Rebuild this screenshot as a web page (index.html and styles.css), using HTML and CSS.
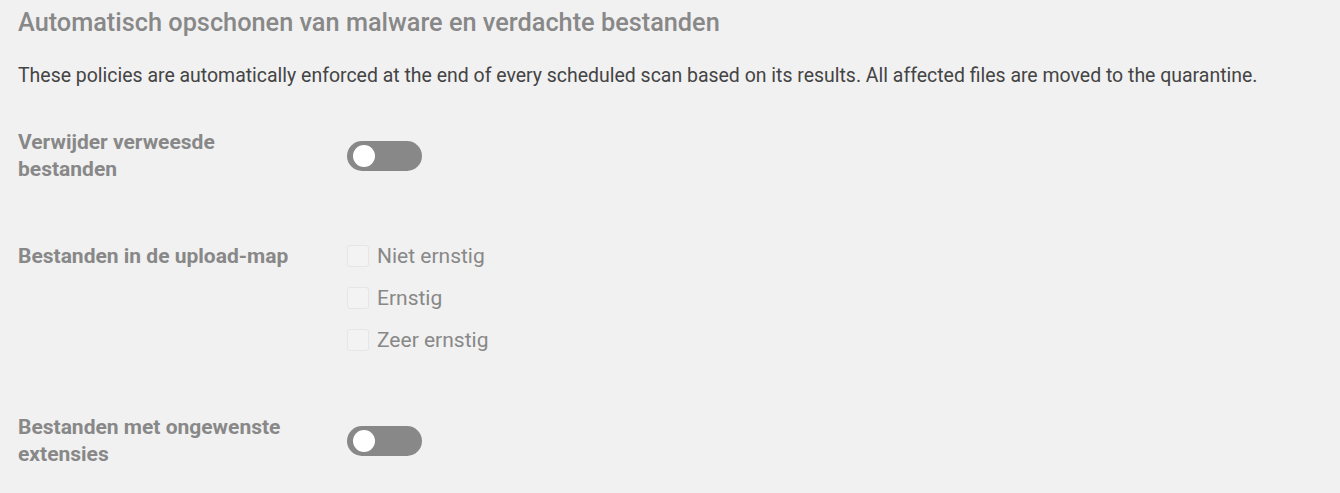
FILE: index.html
```html
<!DOCTYPE html>
<html lang="nl">
<head>
<meta charset="utf-8">
<link rel="stylesheet" href="styles.css">
</head>
<body>
<div class="page">
  <h2 class="title">Automatisch opschonen van malware en verdachte bestanden</h2>
  <p class="desc">These policies are automatically enforced at the end of every scheduled scan based on its results. All affected files are moved to the quarantine.</p>

  <div class="row row-toggle">
    <div class="label">Verwijder verweesde bestanden</div>
    <div class="control"><span class="toggle"><span class="knob"></span></span></div>
  </div>

  <div class="row row-checks">
    <div class="label">Bestanden in de upload-map</div>
    <div class="control checks">
      <label class="check"><span class="box"></span><span>Niet ernstig</span></label>
      <label class="check"><span class="box"></span><span>Ernstig</span></label>
      <label class="check"><span class="box"></span><span>Zeer ernstig</span></label>
    </div>
  </div>

  <div class="row row-toggle">
    <div class="label">Bestanden met ongewenste extensies</div>
    <div class="control"><span class="toggle"><span class="knob"></span></span></div>
  </div>
</div>
</body>
</html>
```

FILE: styles.css
```css
html, body {
  margin: 0;
  padding: 0;
  background: #f1f1f1;
}
body {
  font-family: Roboto, "Liberation Sans", sans-serif;
}
.page {
  padding: 8px 18px 0 18px;
}
.title {
  margin: 0;
  font-size: 25.3px;
  font-weight: 500;
  color: #888888;
  line-height: 30px;
}
.desc {
  margin: 23.5px 0 0 0;
  font-size: 19.47px;
  color: #444444;
  line-height: 27px;
}
.row {
  display: grid;
  grid-template-columns: 280px 1fr;
  column-gap: 49px;
  margin-top: 58.5px;
}
.desc + .row { margin-top: 40px; }
.row-toggle {
  align-items: center;
}
.label {
  font-size: 21px;
  font-weight: 700;
  color: #888888;
  line-height: 27px;
}
.row-checks .label {
  padding-top: 2px;
}
.checks {
  display: flex;
  flex-direction: column;
  gap: 12px;
}
.check {
  display: flex;
  align-items: center;
  gap: 8px;
  height: 30px;
  font-size: 21px;
  color: #888888;
}
.box {
  width: 22px;
  height: 22px;
  border: 1px solid #e6e6e6;
  border-radius: 3px;
  background: #f3f3f3;
  box-sizing: border-box;
}
.toggle {
  display: block;
  width: 75px;
  height: 30px;
  border-radius: 15px;
  background: #888888;
  position: relative;
}
.knob {
  position: absolute;
  left: 6px;
  top: 4px;
  width: 22px;
  height: 22px;
  border-radius: 50%;
  background: #ffffff;
}
```
